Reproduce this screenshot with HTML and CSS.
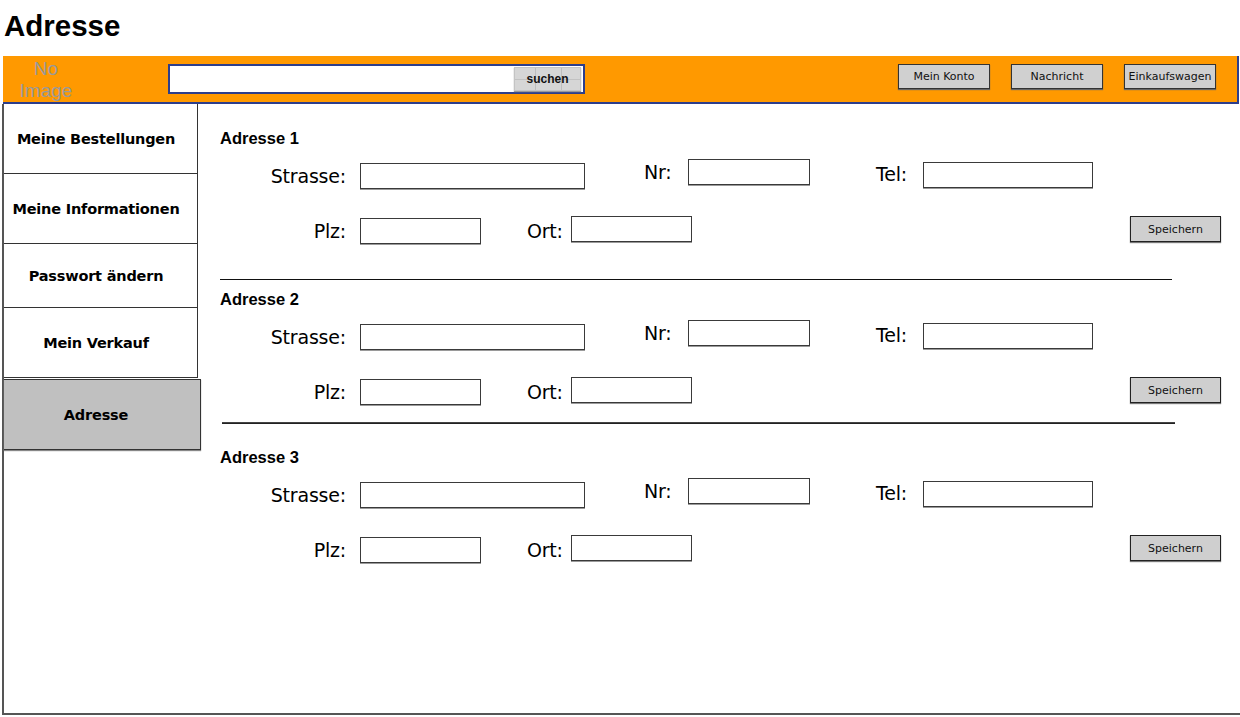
FILE: index.html
```html
<!DOCTYPE html>
<html lang="de">
<head>
<meta charset="utf-8">
<title>Adresse</title>
<link rel="stylesheet" href="styles.css">
</head>
<body>
<h1 class="page-title">Adresse</h1>
<header class="topbar">
  <div class="noimg">No<br>Image</div>
  <div class="search">
    <div class="search-field"></div>
    <button class="search-btn">suchen</button>
  </div>
  <nav class="top-actions">
    <button class="top-btn">Mein Konto</button>
    <button class="top-btn">Nachricht</button>
    <button class="top-btn">Einkaufswagen</button>
  </nav>
</header>
<div class="frame">
  <aside class="sidebar">
    <div class="side-item side-item--a">Meine Bestellungen</div>
    <div class="side-item side-item--a">Meine Informationen</div>
    <div class="side-item side-item--b">Passwort ändern</div>
    <div class="side-item side-item--a">Mein Verkauf</div>
    <div class="side-item side-item--active">Adresse</div>
  </aside>
  <main class="content">
    <section class="addr">
      <h2 class="addr-title">Adresse 1</h2>
      <div class="row row--one">
        <label class="lbl lbl--strasse">Strasse:</label>
        <div class="inp inp--strasse"></div>
        <label class="lbl lbl--nr">Nr:</label>
        <div class="inp inp--nr"></div>
        <label class="lbl lbl--tel">Tel:</label>
        <div class="inp inp--tel"></div>
      </div>
      <div class="row row--two">
        <label class="lbl lbl--plz">Plz:</label>
        <div class="inp inp--plz"></div>
        <label class="lbl lbl--ort">Ort:</label>
        <div class="inp inp--ort"></div>
        <button class="save">Speichern</button>
      </div>
    </section>
    <hr class="sep sep--first">
    <section class="addr">
      <h2 class="addr-title">Adresse 2</h2>
      <div class="row row--one">
        <label class="lbl lbl--strasse">Strasse:</label>
        <div class="inp inp--strasse"></div>
        <label class="lbl lbl--nr">Nr:</label>
        <div class="inp inp--nr"></div>
        <label class="lbl lbl--tel">Tel:</label>
        <div class="inp inp--tel"></div>
      </div>
      <div class="row row--two">
        <label class="lbl lbl--plz">Plz:</label>
        <div class="inp inp--plz"></div>
        <label class="lbl lbl--ort">Ort:</label>
        <div class="inp inp--ort"></div>
        <button class="save">Speichern</button>
      </div>
    </section>
    <hr class="sep sep--second">
    <section class="addr">
      <h2 class="addr-title">Adresse 3</h2>
      <div class="row row--one">
        <label class="lbl lbl--strasse">Strasse:</label>
        <div class="inp inp--strasse"></div>
        <label class="lbl lbl--nr">Nr:</label>
        <div class="inp inp--nr"></div>
        <label class="lbl lbl--tel">Tel:</label>
        <div class="inp inp--tel"></div>
      </div>
      <div class="row row--two">
        <label class="lbl lbl--plz">Plz:</label>
        <div class="inp inp--plz"></div>
        <label class="lbl lbl--ort">Ort:</label>
        <div class="inp inp--ort"></div>
        <button class="save">Speichern</button>
      </div>
    </section>
  </main>
</div>
</body>
</html>
```

FILE: styles.css
```css
* { box-sizing: border-box; }

html, body {
  margin: 0;
  padding: 0;
  background: #fff;
  width: 1240px;
  height: 717px;
  overflow: hidden;
}

body {
  font-family: "DejaVu Sans", "Liberation Sans", sans-serif;
  color: #000;
}

.page-title {
  margin: 0;
  padding: 8px 0 0 4px;
  height: 56px;
  font-family: "Liberation Sans", Arial, sans-serif;
  font-weight: bold;
  font-size: 29.5px;
  line-height: 36px;
}

/* ---------- top bar ---------- */
.topbar {
  margin-left: 3px;
  width: 1236px;
  height: 48px;
  background: #ff9900;
  border-right: 2px solid #2c3e8c;
  border-bottom: 2px solid #2c3e8c;
  display: flex;
  align-items: flex-start;
}

.noimg {
  width: 86px;
  padding-top: 2px;
  text-align: center;
  font-family: "Liberation Sans", Arial, sans-serif;
  font-size: 19px;
  line-height: 22px;
  color: #999;
}

.search {
  margin-left: 79px;
  margin-top: 8px;
  width: 417px;
  height: 30px;
  background: #fff;
  border: 2px solid #2c3e8c;
  display: flex;
  align-items: center;
  justify-content: flex-end;
  padding-right: 2px;
}

.search-field { flex: 1; }

.search-btn {
  width: 67px;
  height: 24px;
  margin: 0;
  padding: 0;
  border: 1px solid #c4c4c4;
  background-color: #d6d6d6;
  background-image:
    linear-gradient(90deg, transparent 20px, #bdbdbd 20px, #bdbdbd 21px, transparent 21px, transparent 46px, #bdbdbd 46px, #bdbdbd 47px, transparent 47px),
    linear-gradient(180deg, transparent 11px, #c2c2c2 11px, #c2c2c2 12px, transparent 12px);
  box-shadow: 0 1px 1px #999;
  font-family: "Liberation Sans", Arial, sans-serif;
  font-weight: bold;
  font-size: 12px;
  color: #111;
}

.top-actions {
  margin-left: auto;
  margin-right: 21px;
  margin-top: 8px;
  display: flex;
  gap: 21px;
}

.top-btn {
  width: 92px;
  height: 25px;
  margin: 0;
  padding: 0;
  background: #d0d0d0;
  border: 1px solid #333;
  box-shadow: 0 1px 1px #666;
  font-family: "DejaVu Sans", sans-serif;
  font-size: 11px;
  color: #111;
}

/* ---------- frame ---------- */
.frame {
  margin-left: 2px;
  width: 1240px;
  height: 611px;
  border-left: 2px solid #555;
  border-bottom: 2px solid #555;
  display: flex;
  align-items: flex-start;
}

.sidebar {
  width: 196px;
  display: flex;
  flex-direction: column;
}

.side-item {
  width: 194px;
  padding-right: 9px;
  display: flex;
  align-items: center;
  justify-content: center;
  font-family: "DejaVu Sans", sans-serif;
  font-weight: bold;
  font-size: 14.5px;
  letter-spacing: -0.2px;
  border-right: 1px solid #333;
  border-bottom: 1px solid #333;
  background: #fff;
}

.side-item--a { height: 70px; }
.side-item--b { height: 64px; }

.side-item--active {
  width: 197px;
  height: 71px;
  margin-top: 1px;
  padding-right: 12px;
  background: #c0c0c0;
  border: 1px solid #333;
  border-left: none;
  box-shadow: 0 1px 1px #888;
}

/* ---------- content ---------- */
.content {
  flex: 1;
  padding: 25px 0 0 20px;
}

.addr-title {
  margin: 0;
  font-family: "Liberation Sans", Arial, sans-serif;
  font-weight: bold;
  font-size: 16.5px;
  line-height: 19px;
  height: 19px;
}

.row {
  display: flex;
  align-items: flex-start;
}

.row--one {
  margin-top: 11px;
  height: 30px;
}

.row--two {
  margin-top: 27px;
  height: 28px;
}

.lbl {
  font-family: "DejaVu Sans", sans-serif;
  font-size: 19px;
  line-height: 26px;
  letter-spacing: -0.2px;
  white-space: nowrap;
}

.inp {
  height: 26px;
  background: #fff;
  border: 1px solid #3a3a3a;
  box-shadow: 0 1px 0 #9a9a9a;
}

.lbl--strasse { width: 126px; text-align: right; margin-top: 4px; }
.inp--strasse { width: 225px; margin-left: 14px; margin-top: 4px; }
.lbl--nr { width: 34px; margin-left: 59px; margin-top: 0; }
.inp--nr { width: 122px; margin-left: 10px; margin-top: 0; }
.lbl--tel { width: 36px; margin-left: 66px; margin-top: 2px; }
.inp--tel { width: 170px; margin-left: 11px; margin-top: 3px; }

.lbl--plz { width: 126px; text-align: right; margin-top: 2px; }
.inp--plz { width: 121px; margin-left: 14px; margin-top: 2px; }
.lbl--ort { width: 40px; margin-left: 46px; margin-top: 2px; }
.inp--ort { width: 121px; margin-left: 4px; margin-top: 0; }

.save {
  margin: 0 0 0 438px;
  width: 91px;
  height: 26px;
  padding: 0;
  background: #cfcfcf;
  border: 1px solid #222;
  box-shadow: 0 1px 1px #777;
  font-family: "DejaVu Sans", sans-serif;
  font-size: 11px;
  color: #111;
}

.sep {
  border: none;
  height: 1px;
  background: #111;
  margin: 0;
}

.sep--first {
  width: 952px;
  margin-top: 35px;
  margin-bottom: 10px;
}

.sep--second {
  width: 953px;
  height: 2px;
  margin-left: 2px;
  margin-top: 17px;
  margin-bottom: 24px;
  background: linear-gradient(180deg, #555, #111);
}
```
